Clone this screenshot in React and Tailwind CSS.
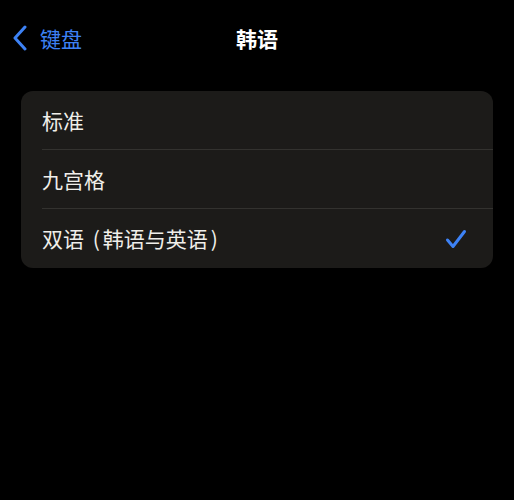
import React from 'react';

const font = { fontFamily: '"Noto Sans CJK SC", "Noto Sans", sans-serif' };

const options = [
  { id: 'std', label: <>标准</> },
  { id: 'nine', label: <>九宫格</> },
  {
    id: 'bi',
    label: (
      <>
        双语 <span className="ml-[4px] mr-[3px]">(</span>韩语与英语<span className="ml-[3px]">)</span>
      </>
    ),
  },
];

export default function App() {
  const selected = 2;
  return (
    <div className="w-[514px] h-[500px] bg-black text-white overflow-hidden" style={font}>
      <div className="relative h-[80px] flex items-center pb-[4px]">
        <button className="flex items-center gap-[11px] pl-[11px] text-[#3d82f5]">
          <svg width="18" height="26" viewBox="0 0 18 26" fill="none">
            <path d="M14 2 L4 13 L14 24" stroke="currentColor" strokeWidth="3" strokeLinecap="round" strokeLinejoin="round" />
          </svg>
          <span className="text-[21px] leading-none">键盘</span>
        </button>
        <div className="absolute left-0 right-0 top-0 h-[76px] flex items-center justify-center pointer-events-none">
          <span className="text-[21px] font-bold leading-none">韩语</span>
        </div>
      </div>
      <div className="mx-[21px] mt-[11px] w-[472px] rounded-[12px] bg-[#1c1b19] overflow-hidden">
        {options.map((o, i) => (
          <div key={o.id} className="pl-[21px]">
            <div className={`h-[59px] flex items-center justify-between pr-[26px] ${i < options.length - 1 ? 'border-b border-[#33322f]' : ''}`}>
              <span className="text-[21px] leading-none text-[#f0efea]">{o.label}</span>
              {i === selected && (
                <svg width="22" height="20" viewBox="0 0 22 20" fill="none">
                  <path d="M2.5 11 L8 17.5 L19.5 2.5" stroke="#3d82f5" strokeWidth="3" strokeLinecap="round" strokeLinejoin="round" />
                </svg>
              )}
            </div>
          </div>
        ))}
      </div>
    </div>
  );
}
